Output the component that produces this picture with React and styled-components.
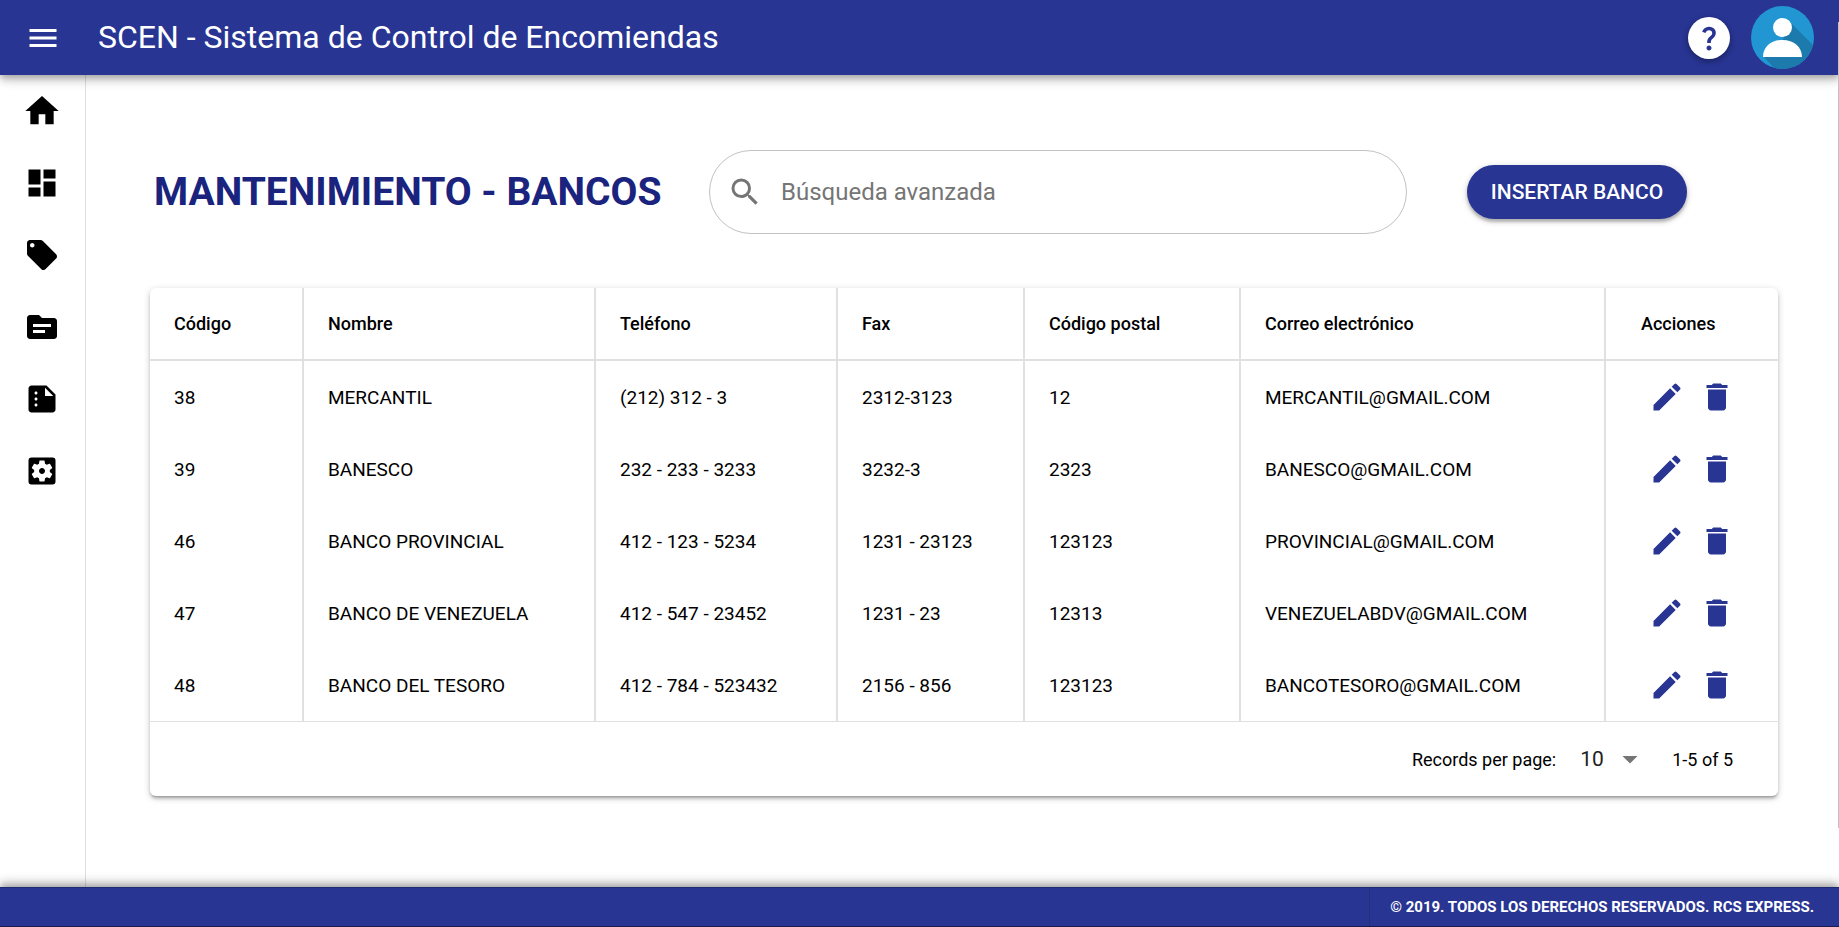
import React from "react";
import styled, { createGlobalStyle } from "styled-components";
import {
  MdMenu, MdHome, MdDashboard, MdLocalOffer, MdSource, MdSummarize,
  MdSettingsApplications, MdSearch, MdEdit, MdDelete, MdArrowDropDown, MdQuestionMark,
} from "react-icons/md";

const INDIGO = "#283593";
const LINE = "#e0e0e0";

const GlobalStyle = createGlobalStyle`
  *, *::before, *::after { box-sizing: border-box; }
  body { margin: 0; background: #fff; color: #000; font-family: Roboto, "Liberation Sans", sans-serif; }
  button, input, select { font: inherit; color: inherit; margin: 0; }
  svg { display: block; flex: none; }
`;

const Page = styled.div`
  position: relative;
  min-height: 100vh;
  display: flex;
  flex-direction: column;
`;

const ScrollThumb = styled.div`
  position: absolute;
  top: 22px;
  right: 0;
  z-index: 3;
  width: 1px;
  height: 87%;
  background: #c1c1c1;
`;

const Header = styled.header`
  position: relative;
  z-index: 2;
  display: flex;
  align-items: center;
  height: 75px;
  padding: 0 25px;
  background: ${INDIGO};
  color: #fff;
  box-shadow: 0 3px 6px -1px rgba(0, 0, 0, 0.2), 0 6px 8px rgba(0, 0, 0, 0.14), 0 2px 15px rgba(0, 0, 0, 0.12);
`;

const IconButton = styled.button`
  display: flex;
  align-items: center;
  justify-content: center;
  padding: 0;
  border: 0;
  background: none;
  color: inherit;
  font-size: 36px;
  cursor: pointer;
`;

const AppTitle = styled.span`
  flex: 1;
  margin-left: 37px;
  padding-bottom: 2px;
  font-size: 32px;
  line-height: 40px;
`;

const HelpButton = styled(IconButton)`
  width: 42px;
  height: 42px;
  margin-right: 21px;
  border-radius: 50%;
  background: #fff;
  color: ${INDIGO};
  font-size: 30px;
  box-shadow: 0 2px 6px rgba(0, 0, 0, 0.4);
`;

const AvatarButton = styled(IconButton)`
  width: 63px;
  height: 63px;
`;

const Body = styled.div`
  flex: 1;
  display: flex;
`;

const Sidebar = styled.nav`
  flex: none;
  width: 86px;
  padding-right: 1px;
  border-right: 1px solid ${LINE};
`;

const NavLink = styled.a`
  display: flex;
  align-items: center;
  justify-content: center;
  height: 72px;
  color: #000;
  font-size: ${(p) => (p.$large ? 40 : 36)}px;
`;

const Main = styled.main`
  flex: 1;
  min-width: 0;
  padding: 75px 61px 75px 64px;
`;

const TopRow = styled.div`
  display: flex;
  align-items: center;
  padding: 0 91px 0 4px;
`;

const Heading = styled.h1`
  margin: 0;
  width: 555px;
  color: #1a237e;
  font-size: 39px;
  line-height: 48px;
  font-weight: 700;
  white-space: nowrap;
`;

const SearchBox = styled.label`
  flex: 1;
  display: flex;
  align-items: center;
  height: 84px;
  padding: 0 17px;
  border: 1px solid #c2c2c2;
  border-radius: 42px;
  color: #757575;
  font-size: 36px;
`;

const SearchInput = styled.input`
  flex: 1;
  min-width: 0;
  margin-left: 18px;
  padding: 0;
  border: 0;
  outline: 0;
  background: none;
  font-size: 24px;
  line-height: 36px;
  &::placeholder { color: #757575; opacity: 1; }
`;

const InsertButton = styled.button`
  width: 220px;
  height: 54px;
  margin-left: 60px;
  padding: 0;
  border: 0;
  border-radius: 27px;
  background: ${INDIGO};
  color: #fff;
  font-size: 21px;
  font-weight: 500;
  white-space: nowrap;
  cursor: pointer;
  box-shadow: 0 2px 7px rgba(0, 0, 0, 0.2), 0 3px 3px rgba(0, 0, 0, 0.2);
`;

const Card = styled.section`
  margin-top: 54px;
  border-radius: 6px;
  background: #fff;
  box-shadow: 0 2px 7px rgba(0, 0, 0, 0.2), 0 3px 3px rgba(0, 0, 0, 0.14), 0 3px 2px -2px rgba(0, 0, 0, 0.2);
`;

const Table = styled.table`
  width: 100%;
  table-layout: fixed;
  border-collapse: separate;
  border-spacing: 0;
`;

const Cell = styled.td`
  height: 72px;
  padding: 0 0 0 24px;
  text-align: left;
  white-space: nowrap;
  font-size: 19px;
  & + & { border-left: 2px solid ${LINE}; }
`;

const HeadCell = styled(Cell)`
  height: 73px;
  font-size: 18px;
  font-weight: 500;
  border-bottom: 2px solid ${LINE};
  & + & { border-left: 2px solid ${LINE}; }
  &:last-child { padding-left: 35px; }
`;

const Actions = styled.div`
  display: flex;
  gap: 14px;
  padding-left: 19px;
  color: ${INDIGO};
`;

const Pagination = styled.footer`
  display: flex;
  align-items: center;
  justify-content: flex-end;
  height: 75px;
  padding-right: 45px;
  border-top: 1px solid ${LINE};
  font-size: 18px;
`;

const SelectWrap = styled.span`
  display: grid;
  align-items: center;
  width: 68px;
  margin: 0 24px;
  font-size: 36px;
  color: #757575;
  & > * { grid-area: 1 / 1; }
  & > svg { justify-self: end; pointer-events: none; }
`;

const Select = styled.select`
  appearance: none;
  padding: 0;
  border: 0;
  outline: 0;
  background: none;
  color: #212121;
  font-size: 21px;
  line-height: 36px;
`;

const Footer = styled.footer`
  position: relative;
  z-index: 2;
  display: flex;
  justify-content: flex-end;
  height: 40px;
  border-top: 1px solid #1f2a72;
  border-bottom: 1px solid #1c1c4c;
  background: ${INDIGO};
  color: #fff;
  box-shadow: 0 -3px 6px -1px rgba(0, 0, 0, 0.2), 0 -6px 8px rgba(0, 0, 0, 0.12), 0 -2px 15px rgba(0, 0, 0, 0.12);
`;

const Copyright = styled.div`
  display: flex;
  align-items: center;
  padding: 0 25px 0 20px;
  border-left: 1px solid #24307f;
  font-size: 15px;
  font-weight: 700;
`;

const NAV = [
  ["Inicio", MdHome],
  ["Panel", MdDashboard],
  ["Etiquetas", MdLocalOffer],
  ["Archivos", MdSource],
  ["Reportes", MdSummarize],
  ["Ajustes", MdSettingsApplications],
];

const COLUMNS = [
  ["Código", 152],
  ["Nombre", 292],
  ["Teléfono", 242],
  ["Fax", 187],
  ["Código postal", 216],
  ["Correo electrónico", 365],
  ["Acciones", 174],
];

const BANKS = [
  ["38", "MERCANTIL", "(212) 312 - 3", "2312-3123", "12", "MERCANTIL@GMAIL.COM"],
  ["39", "BANESCO", "232 - 233 - 3233", "3232-3", "2323", "BANESCO@GMAIL.COM"],
  ["46", "BANCO PROVINCIAL", "412 - 123 - 5234", "1231 - 23123", "123123", "PROVINCIAL@GMAIL.COM"],
  ["47", "BANCO DE VENEZUELA", "412 - 547 - 23452", "1231 - 23", "12313", "VENEZUELABDV@GMAIL.COM"],
  ["48", "BANCO DEL TESORO", "412 - 784 - 523432", "2156 - 856", "123123", "BANCOTESORO@GMAIL.COM"],
];

const TOTAL_WIDTH = COLUMNS.reduce((sum, [, width]) => sum + width, 0);

function Avatar() {
  return (
    <svg width="63" height="63" viewBox="0 0 63 63" aria-hidden="true">
      <defs>
        <clipPath id="avatar-disc"><circle cx="31.5" cy="31.5" r="31.5" /></clipPath>
      </defs>
      <g clipPath="url(#avatar-disc)">
        <rect width="63" height="63" fill="#2196d3" />
        <path d="M38 15 L63 40 V63 H24 L12 50 L30 40 Z" fill="#1c7aad" />
      </g>
      <circle cx="31.5" cy="21.5" r="9.5" fill="#fff" />
      <path d="M12 51 C12 41 20 34 31.5 34 C43 34 51 41 51 51 Z" fill="#fff" />
    </svg>
  );
}

export default function App() {
  return (
    <Page>
      <GlobalStyle />
      <Header>
        <IconButton type="button" aria-label="Menú"><MdMenu /></IconButton>
        <AppTitle>SCEN - Sistema de Control de Encomiendas</AppTitle>
        <HelpButton type="button" aria-label="Ayuda"><MdQuestionMark /></HelpButton>
        <AvatarButton type="button" aria-label="Cuenta"><Avatar /></AvatarButton>
      </Header>
      <Body>
        <Sidebar>
          {NAV.map(([label, Icon], i) => (
            <NavLink key={label} href="#" aria-label={label} $large={i === 0}><Icon /></NavLink>
          ))}
        </Sidebar>
        <Main>
          <TopRow>
            <Heading>MANTENIMIENTO - BANCOS</Heading>
            <SearchBox>
              <MdSearch aria-hidden="true" />
              <SearchInput type="text" placeholder="Búsqueda avanzada" aria-label="Búsqueda avanzada" />
            </SearchBox>
            <InsertButton type="button">INSERTAR BANCO</InsertButton>
          </TopRow>
          <Card>
            <Table>
              <colgroup>
                {COLUMNS.map(([name, width]) => (
                  <col key={name} style={{ width: `${(width / TOTAL_WIDTH) * 100}%` }} />
                ))}
              </colgroup>
              <thead>
                <tr>
                  {COLUMNS.map(([name]) => <HeadCell as="th" scope="col" key={name}>{name}</HeadCell>)}
                </tr>
              </thead>
              <tbody>
                {BANKS.map((bank) => (
                  <tr key={bank[0]}>
                    {bank.map((value, i) => <Cell key={i}>{value}</Cell>)}
                    <Cell>
                      <Actions>
                        <IconButton type="button" aria-label={`Editar ${bank[1]}`}><MdEdit /></IconButton>
                        <IconButton type="button" aria-label={`Eliminar ${bank[1]}`}><MdDelete /></IconButton>
                      </Actions>
                    </Cell>
                  </tr>
                ))}
              </tbody>
            </Table>
            <Pagination>
              <label htmlFor="page-size">Records per page:</label>
              <SelectWrap>
                <Select id="page-size" defaultValue="10">
                  <option>5</option>
                  <option>10</option>
                  <option>20</option>
                </Select>
                <MdArrowDropDown aria-hidden="true" />
              </SelectWrap>
              <span>1-5 of 5</span>
            </Pagination>
          </Card>
        </Main>
      </Body>
      <Footer>
        <Copyright>© 2019. TODOS LOS DERECHOS RESERVADOS. RCS EXPRESS.</Copyright>
      </Footer>
      <ScrollThumb />
    </Page>
  );
}
